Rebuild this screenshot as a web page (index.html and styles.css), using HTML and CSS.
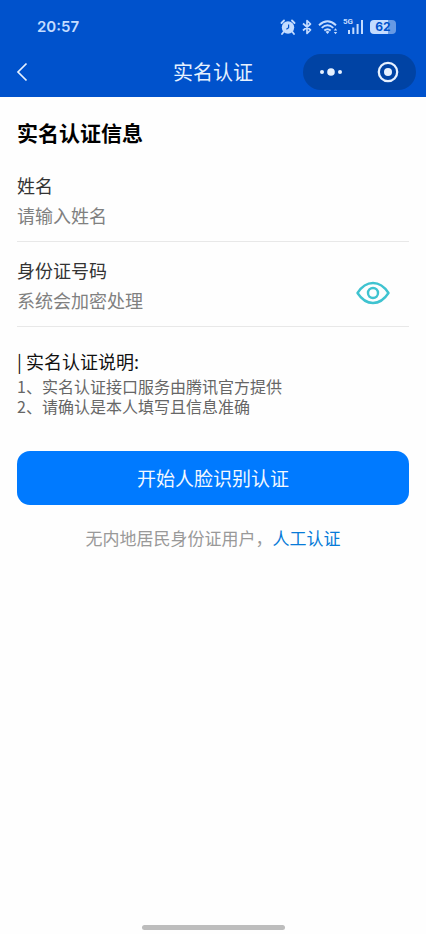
FILE: index.html
```html
<!DOCTYPE html>
<html lang="zh-CN">
<head>
  <meta charset="utf-8">
  <meta name="viewport" content="width=device-width, initial-scale=1">
  <title>实名认证</title>
  <link rel="stylesheet" href="styles.css">
</head>
<body>
  <header class="header">
    <div class="status">
      <span class="time">20:57</span>
      <div class="status-icons">
        <svg width="16" height="16" viewBox="0 0 16 16" aria-hidden="true">
          <circle cx="8" cy="8.500" r="6.200" fill="currentColor"/>
          <path d="M1.500 4 4 1.500M14.500 4 12 1.500M3.500 13 2 15M12.500 13 14 15" fill="none" stroke="currentColor" stroke-width="1.800" stroke-linecap="round"/>
          <path d="M8.600 5.500v3.300L6.400 10.300" fill="none" stroke="#0052cc" stroke-width="1.200"/>
        </svg>
        <svg width="10" height="16" viewBox="0 0 10 16" aria-hidden="true">
          <path d="M1 4.500 8.500 11 5 14.300V1.700L8.500 5 1 11.500" fill="none" stroke="currentColor" stroke-width="1.700" stroke-linejoin="round"/>
        </svg>
        <svg width="20" height="16" viewBox="0 0 20 16" aria-hidden="true">
          <path d="M1 6.200Q9.500-1.500 18 6.200M3.700 8.900Q9.500 3.700 15.300 8.900M6.300 11.500Q9.500 8.900 12.700 11.500" fill="none" stroke="currentColor" stroke-width="1.900"/>
          <path d="M7.500 12.700Q9.500 11.300 11.500 12.700L9.500 15ZM15.800 11.500 17.500 9.200 19.200 11.500ZM15.800 13 17.500 15.300 19.200 13Z" fill="currentColor"/>
        </svg>
        <div class="signal">
          <span class="network">5G</span>
          <svg width="20" height="16" viewBox="0 0 20 16" aria-hidden="true">
            <path d="M5 11v4M9.300 8.500V15M13.600 5v10M18 1v14" fill="none" stroke="currentColor" stroke-width="2"/>
          </svg>
        </div>
        <span class="battery">62</span>
      </div>
    </div>
    <nav class="navbar">
      <button class="back" type="button" aria-label="返回">
        <svg width="12" height="20" viewBox="0 0 12 20" aria-hidden="true">
          <path d="M10.500 1.500 2 10l8.500 8.500" fill="none" stroke="currentColor" stroke-width="1.700"/>
        </svg>
      </button>
      <h1 class="title">实名认证</h1>
      <div class="capsule">
        <button type="button" aria-label="更多">
          <svg width="24" height="24" viewBox="0 0 24 24" fill="currentColor" aria-hidden="true">
            <circle cx="3" cy="12" r="2"/><circle cx="12" cy="12" r="3.800"/><circle cx="21" cy="12" r="2"/>
          </svg>
        </button>
        <button type="button" aria-label="关闭">
          <svg width="24" height="24" viewBox="0 0 24 24" aria-hidden="true">
            <circle cx="12" cy="12" r="9.200" fill="none" stroke="currentColor" stroke-width="2.300"/>
            <circle cx="12" cy="12" r="4" fill="currentColor"/>
          </svg>
        </button>
      </div>
    </nav>
  </header>

  <main class="content">
    <h2 class="heading">实名认证信息</h2>
    <form>
      <div class="field">
        <label for="name">姓名</label>
        <input id="name" type="text" placeholder="请输入姓名">
      </div>
      <div class="field">
        <label for="id-number">身份证号码</label>
        <input id="id-number" type="text" placeholder="系统会加密处理">
        <button class="reveal" type="button" aria-label="显示身份证号码">
          <svg width="34" height="24" viewBox="0 0 34 24" fill="none" stroke="currentColor" stroke-width="2.400" aria-hidden="true">
            <path d="M1.500 12Q8 2 17 2t15.500 10Q26 22 17 22T1.500 12Z" stroke-linejoin="round"/>
            <circle cx="17" cy="12" r="5"/>
          </svg>
        </button>
      </div>
      <section class="notes">
        <h3>| 实名认证说明:</h3>
        <p>1、实名认证接口服务由腾讯官方提供</p>
        <p>2、请确认是本人填写且信息准确</p>
      </section>
      <button class="submit" type="submit">开始人脸识别认证</button>
    </form>
    <p class="manual">无内地居民身份证用户，<a href="#manual">人工认证</a></p>
  </main>
  <div class="home-bar"></div>
</body>
</html>
```
FILE: styles.css
```css
* {
  box-sizing: border-box;
}

body {
  display: flex;
  flex-direction: column;
  min-height: 100vh;
  margin: 0;
  background: #fefefe;
  color: #333;
  font-family: "Noto Sans CJK SC", sans-serif;
}

h1, h2, h3, p {
  margin: 0;
}

button, input {
  padding: 0;
  border: 0;
  background: none;
  color: inherit;
  font: inherit;
}

svg {
  display: block;
}

.header {
  padding-bottom: 7px;
  background: #0052cc;
  color: #e6f1ff;
}

.status {
  display: flex;
  align-items: center;
  justify-content: space-between;
  height: 54px;
  padding: 0 30px 0 37px;
  color: #c4dcff;
}

.time {
  font: 600 15px/20px Inter, sans-serif;
}

.status-icons {
  display: flex;
  align-items: center;
  gap: 6px;
}

.signal {
  position: relative;
}

.network {
  position: absolute;
  top: -1px;
  left: -1px;
  font: 700 8px/8px Roboto, sans-serif;
}

.battery {
  width: 26px;
  border-radius: 4px;
  background: linear-gradient(90deg, #c4dcff 70%, #6699e4 70%);
  color: #0052cc;
  font: 700 12px/14px Inter, sans-serif;
  text-align: center;
}

.navbar {
  display: grid;
  grid-template-columns: 1fr auto 1fr;
  align-items: center;
  padding: 0 10px;
}

.back {
  justify-self: start;
  padding: 0 6px;
}

.title {
  font-size: 20px;
  font-weight: 400;
  line-height: 36px;
}

.capsule {
  display: flex;
  align-items: center;
  justify-content: space-between;
  justify-self: end;
  width: 113px;
  height: 36px;
  padding: 0 16px;
  border-radius: 18px;
  background: #0043a4;
}

.content {
  flex: 1;
  padding: 19px 17px;
}

.heading {
  margin-bottom: 22px;
  color: #000;
  font-size: 21px;
  line-height: 32px;
}

.field {
  position: relative;
  margin-bottom: 13px;
  padding-bottom: 11px;
  border-bottom: 1px solid #e8e8e8;
  font-size: 18px;
}

.field label {
  display: block;
  line-height: 30px;
}

.field input {
  display: block;
  width: 100%;
  height: 30px;
  outline: 0;
}

.field input::placeholder {
  color: #808080;
  opacity: 1;
}

.reveal {
  position: absolute;
  top: 26px;
  right: 19px;
  color: #3fc3d0;
}

.notes {
  padding-top: 6px;
  color: #666;
  font-size: 16px;
  line-height: 20px;
}

.notes h3 {
  color: #111;
  font-size: 18px;
  font-weight: 400;
  line-height: 30px;
}

.submit {
  width: 100%;
  height: 54px;
  margin-top: 35px;
  padding-bottom: 2px;
  border-radius: 13px;
  background: #007aff;
  color: #f2f8ff;
  font-size: 19px;
}

.manual {
  margin-top: 20px;
  color: #999;
  font-size: 17px;
  line-height: 26px;
  text-align: center;
}

.manual a {
  color: #087bd8;
  text-decoration: none;
}

.home-bar {
  width: 143px;
  height: 5px;
  margin: 0 auto 4px;
  border-radius: 3px;
  background: #bdbdbd;
}
```
